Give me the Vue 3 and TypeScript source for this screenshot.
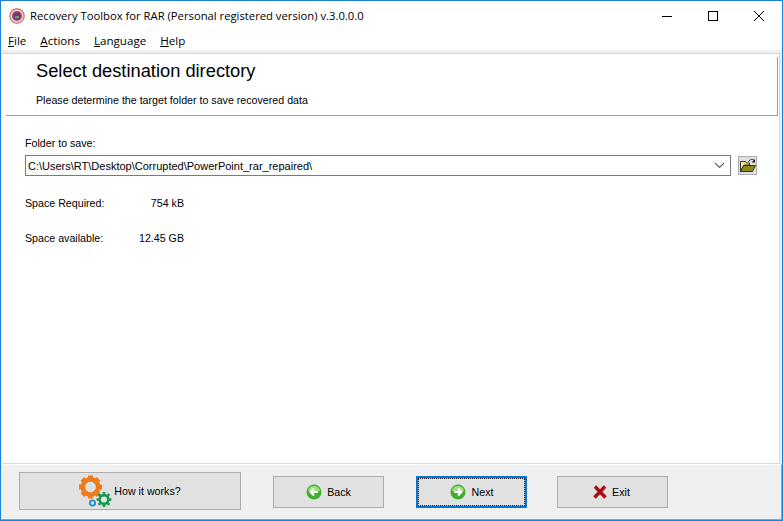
<script setup lang="ts">
const menus: [string, string][] = [['F', 'ile'], ['A', 'ctions'], ['L', 'anguage'], ['H', 'elp']]
const gearTeeth = [0, 45, 90, 135, 180, 225, 270, 315]
</script>

<template>
  <div class="window">
    <div class="titlebar">
      <svg class="appicon" width="16" height="16" viewBox="0 0 16 16">
        <circle cx="8" cy="8" r="7.2" fill="#f3d9d9" stroke="#c9686c" stroke-width="1.2" />
        <circle cx="8" cy="8" r="5" fill="#b03a52" />
        <rect x="5" y="5" width="6" height="6" fill="#5a3f8c" />
        <rect x="6" y="8" width="4" height="2" fill="#5fa860" />
      </svg>
      <span class="title">Recovery Toolbox for RAR (Personal registered version) v.3.0.0.0</span>
      <div class="caption">
        <svg width="46" height="30" viewBox="0 0 46 30"><path d="M18 15.5h10" stroke="#000" fill="none" /></svg>
        <svg width="46" height="30" viewBox="0 0 46 30"><rect x="18.5" y="10.5" width="9" height="9" stroke="#000" fill="none" /></svg>
        <svg width="46" height="30" viewBox="0 0 46 30"><path d="M18 10l10 10M28 10l-10 10" stroke="#000" fill="none" /></svg>
      </div>
    </div>
    <div class="menubar">
      <span v-for="m in menus" :key="m[0]" class="menu"><u>{{ m[0] }}</u>{{ m[1] }}</span>
    </div>
    <div class="client">
      <div class="panel">
        <header class="head">
          <h1>Select destination directory</h1>
          <p>Please determine the target folder to save recovered data</p>
        </header>
        <main class="body">
          <label class="folder-label">Folder to save:</label>
          <div class="folder-row">
            <div class="combo">
              <span>C:\Users\RT\Desktop\Corrupted\PowerPoint_rar_repaired\</span>
              <svg width="11" height="7" viewBox="0 0 11 7"><path d="M1 1l4.5 4.5L10 1" stroke="#606060" stroke-width="1.1" fill="none" /></svg>
            </div>
            <button class="browse" type="button" aria-label="Browse">
              <svg width="16" height="15" viewBox="0 0 16 15">
                <path d="M8.5 4C9.5 1.5 12 .8 14 2.2" stroke="#222" fill="none" />
                <path d="M15 1v3.4h-3.4z" fill="#222" />
                <path d="M.5 13.5V3.5h5l1 1.5h3v2H4z" fill="#fff27a" stroke="#222" stroke-width=".9" />
                <path d="M.5 13.5L3.5 7.5h12l-3 6z" fill="#8d8a1e" stroke="#222" stroke-width=".9" />
              </svg>
            </button>
          </div>
          <div class="stat"><span class="stat-label">Space Required:</span><span class="stat-value">754 kB</span></div>
          <div class="stat second"><span class="stat-label">Space available:</span><span class="stat-value">12.45 GB</span></div>
        </main>
      </div>
      <footer class="footer">
        <button class="btn how" type="button">
          <svg width="34" height="34" viewBox="0 0 34 34">
            <g transform="translate(-1 .5)">
              <g fill="#ee7c1c">
                <rect v-for="a in gearTeeth" :key="a" x="10" y="1" width="5" height="6" :transform="`rotate(${a} 12.5 12.5)`" />
              </g>
              <circle cx="12.5" cy="12.5" r="7.7" fill="none" stroke="#ee7c1c" stroke-width="4.6" />
            </g>
            <g fill="#0f9a50">
              <rect v-for="a in gearTeeth" :key="a" x="23.8" y="18" width="2.4" height="3" :transform="`rotate(${a} 25 25.5)`" />
            </g>
            <circle cx="25" cy="25.5" r="4.4" fill="none" stroke="#0f9a50" stroke-width="2.6" />
            <circle cx="13.5" cy="29" r="2.6" fill="none" stroke="#1d8fc9" stroke-width="1.8" />
          </svg>
          <span>How it works?</span>
        </button>
        <button class="btn nav first" type="button">
          <svg class="arrow" width="16" height="16" viewBox="0 0 16 16">
            <circle cx="8" cy="8" r="7.5" fill="#3fb02c" />
            <path d="M2 7a6 5 0 0 1 12 0z" fill="#9fdc7e" />
            <path d="M12 8H5.5M8 4.6L4.6 8 8 11.4" stroke="#fff" stroke-width="2.2" fill="none" />
          </svg>
          <span>Back</span>
        </button>
        <button class="btn nav default" type="button">
          <svg class="arrow" width="16" height="16" viewBox="0 0 16 16">
            <circle cx="8" cy="8" r="7.5" fill="#3fb02c" />
            <path d="M2 7a6 5 0 0 1 12 0z" fill="#9fdc7e" />
            <path d="M4 8h6.5M8 4.6L11.4 8 8 11.4" stroke="#fff" stroke-width="2.2" fill="none" />
          </svg>
          <span>Next</span>
        </button>
        <button class="btn nav exit" type="button">
          <svg class="arrow" width="14" height="14" viewBox="0 0 14 14">
            <path d="M2 1.5l10.5 11M12 1.5L1.5 12.5" stroke="#a80d14" stroke-width="3.4" fill="none" />
          </svg>
          <span>Exit</span>
        </button>
      </footer>
    </div>
  </div>
</template>

<style>
html, body { margin: 0; padding: 0; }
</style>

<style scoped>
.window {
  width: 783px;
  height: 521px;
  box-sizing: border-box;
  border: 1px solid #1883d7;
  background: #fff;
  display: flex;
  flex-direction: column;
  overflow: hidden;
  font-family: "Liberation Sans", Arial, sans-serif;
  font-size: 10.67px;
  color: #000;
}
.titlebar {
  height: 29px;
  flex: none;
  display: flex;
  align-items: center;
  padding-left: 8px;
}
.appicon { flex: none; margin-right: 5px; }
.title {
  font-family: "Open Sans", "Noto Sans", sans-serif;
  font-size: 11.25px;
  flex: 1;
  white-space: nowrap;
}
.caption { display: flex; flex: none; }
.caption svg { display: block; }
.menubar {
  height: 20px;
  flex: none;
  display: flex;
  align-items: center;
  gap: 14px;
  padding-left: 7px;
  font-family: "Open Sans", "Noto Sans", sans-serif;
  font-size: 11.6px;
}
.client {
  flex: 1;
  min-height: 0;
  background: #f0f0f0;
  display: flex;
  flex-direction: column;
  padding-top: 3px;
}
.panel {
  flex: 1;
  min-height: 0;
  display: flex;
  flex-direction: column;
  margin-left: 1px;
  margin-right: 2px;
  background: #fff;
  border: 1px solid #d8d8d8;
  border-left: 0;
}
.head {
  height: 62px;
  flex: none;
  box-sizing: border-box;
  padding: 7px 0 0 30px;
  margin: 0 1px 0 4px;
  border-bottom: 1px solid #a0a0a0;
  background: linear-gradient(#a0a0a0, #a0a0a0) right 3px / 1px calc(100% - 3px) no-repeat;
}
.head h1 {
  margin: 0;
  font-size: 18.3px;
  font-weight: 400;
  line-height: 20px;
}
.head p {
  margin: 12px 0 0;
  line-height: 14px;
}
.body {
  flex: 1;
  min-height: 0;
  padding: 20px 0 0 23px;
}
.folder-label { display: block; line-height: 14px; }
.folder-row {
  display: flex;
  align-items: center;
  margin-top: 5px;
  gap: 7px;
}
.combo {
  width: 706px;
  height: 21px;
  box-sizing: border-box;
  border: 1px solid #7a7a7a;
  display: flex;
  align-items: center;
  justify-content: space-between;
  padding: 0 5px 0 2px;
  font-size: 11px;
  background: #fff;
}
.browse {
  width: 19px;
  height: 19px;
  padding: 0;
  border: 1px solid #adadad;
  background: #e1e1e1;
  display: flex;
  align-items: center;
  justify-content: center;
}
.stat { display: flex; margin-top: 20px; line-height: 14px; white-space: nowrap; }
.stat.second { margin-top: 21px; }
.stat-label { width: 113px; }
.stat-value { width: 46px; text-align: right; }
.footer {
  height: 56px;
  flex: none;
  display: flex;
  align-items: flex-start;
  padding: 7px 0 0 18px;
  box-sizing: border-box;
  border-top: 1px solid #fff;
  border-bottom: 1px solid #a0a0a0;
  border-right: 1px solid #a0a0a0;
}
.btn {
  box-sizing: border-box;
  border: 1px solid #adadad;
  background: #e1e1e1;
  font-family: "Liberation Sans", Arial, sans-serif;
  font-size: 10.67px;
  color: #000;
  display: flex;
  align-items: center;
  justify-content: center;
  padding: 0;
}
.how {
  width: 222px;
  height: 38px;
  margin-right: 32px;
  gap: 1px;
}
.how span { margin-top: -1px; }
.nav {
  width: 111px;
  height: 32px;
  margin-top: 4px;
  margin-right: 32px;
  gap: 5px;
}
.exit { padding-right: 2px; }
.arrow { flex: none; }
.default {
  margin-right: 30px;
  gap: 6px;
  border: 2px solid #0078d7;
  outline: 1px dotted #000;
  outline-offset: -3px;
}
</style>
